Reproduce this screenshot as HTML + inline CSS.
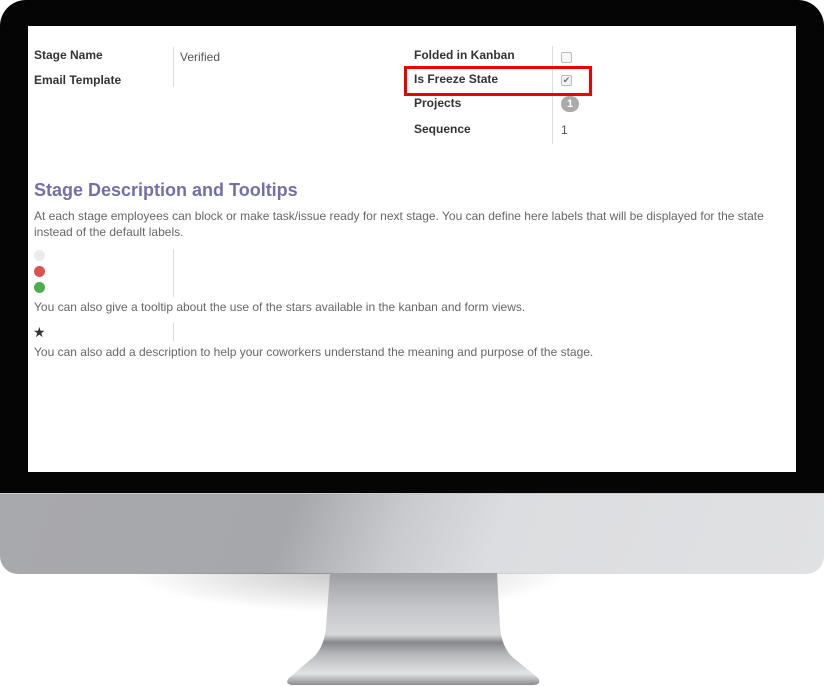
<!DOCTYPE html>
<html><head><style>
body{margin:0;width:824px;height:686px;background:#fff;position:relative;overflow:hidden;font-family:"Liberation Sans",sans-serif;}
.abs{position:absolute}
.t{position:absolute;font-size:12px;color:#555;white-space:nowrap}
.b{font-weight:bold;color:#333}
.vl{position:absolute;width:1px;background:#ddd}
</style></head><body>
<div class="abs" style="left:0;top:0;width:824px;height:494px;background:#050505;border-radius:26px 26px 0 0"></div>
<div class="abs" style="left:0;top:493px;width:824px;height:80px;border-radius:0 0 18px 18px;background:linear-gradient(110deg,#a8a9ad 0%,#a6a7ab 35%,#c9cace 48%,#dcdde0 60%,#e0e1e3 100%);border-top:1px solid #c8c9cc"></div>
<div class="abs" style="left:130px;top:573px;width:440px;height:40px;background:radial-gradient(ellipse at center top,rgba(0,0,0,0.22),rgba(0,0,0,0) 70%)"></div>
<svg class="abs" style="left:280px;top:572px" width="270" height="114">
<defs><linearGradient id="g" x1="0" y1="0" x2="0" y2="1">
<stop offset="0" stop-color="#9d9ea2"/><stop offset="0.3" stop-color="#c4c5c9"/><stop offset="0.55" stop-color="#d7d8da"/><stop offset="0.62" stop-color="#86878b"/><stop offset="0.72" stop-color="#b5b6b9"/><stop offset="0.9" stop-color="#e2e3e5"/><stop offset="1" stop-color="#8a8b8f"/></linearGradient></defs>
<path d="M50 1 L217 1 L220 55 Q222 78 236 88 L258 106 Q262 112 254 113 L12 113 Q4 112 9 106 L30 88 Q44 78 46 55 Z" fill="url(#g)"/>
</svg>
<div class="abs" style="left:28px;top:26px;width:768px;height:446px;background:#fff"></div>

<div class="t b" style="left:34px;top:48px">Stage Name</div>
<div class="t b" style="left:34px;top:73px">Email Template</div>
<div class="vl" style="left:173px;top:47px;height:40px"></div>
<div class="t" style="left:180px;top:50px">Verified</div>

<div class="t b" style="left:414px;top:48px">Folded in Kanban</div>
<div class="t b" style="left:414px;top:72px">Is Freeze State</div>
<div class="t b" style="left:414px;top:96px">Projects</div>
<div class="t b" style="left:414px;top:122px">Sequence</div>
<div class="vl" style="left:552px;top:46px;height:98px"></div>
<div class="abs" style="left:561px;top:52px;width:9px;height:9px;border:1px solid #bbb;border-radius:2px;background:#f7f7f7"></div>
<div class="abs" style="left:561px;top:75px;width:9px;height:9px;border:1px solid #bbb;border-radius:2px;background:#f3f3f3;font-size:9px;line-height:9px;color:#777;text-align:center">✔</div>
<div class="abs" style="left:404px;top:66px;width:182px;height:24px;border:3px solid #ee0000"></div>
<div class="abs" style="left:561px;top:96px;width:18px;height:16px;border-radius:8px;background:#aaa;color:#fff;font-size:11px;font-weight:bold;text-align:center;line-height:16px">1</div>
<div class="t" style="left:561px;top:123px">1</div>

<div class="abs" style="left:34px;top:180px;font-size:18px;font-weight:bold;color:#7370a8">Stage Description and Tooltips</div>
<div class="t" style="left:34px;top:209px;color:#666">At each stage employees can block or make task/issue ready for next stage. You can define here labels that will be displayed for the state</div>
<div class="t" style="left:34px;top:225px;color:#666">instead of the default labels.</div>
<div class="abs" style="left:34px;top:250px;width:11px;height:11px;border-radius:50%;background:#ececec"></div>
<div class="abs" style="left:34px;top:266px;width:11px;height:11px;border-radius:50%;background:#d9534f"></div>
<div class="abs" style="left:34px;top:282px;width:11px;height:11px;border-radius:50%;background:#4cae4c"></div>
<div class="vl" style="left:173px;top:249px;height:48px"></div>
<div class="t" style="left:34px;top:300px;color:#666">You can also give a tooltip about the use of the stars available in the kanban and form views.</div>
<div class="abs" style="left:33px;top:325px;font-size:14px;color:#333;line-height:14px">★</div>
<div class="vl" style="left:173px;top:323px;height:18px"></div>
<div class="t" style="left:34px;top:345px;color:#666">You can also add a description to help your coworkers understand the meaning and purpose of the stage.</div>
</body></html>
